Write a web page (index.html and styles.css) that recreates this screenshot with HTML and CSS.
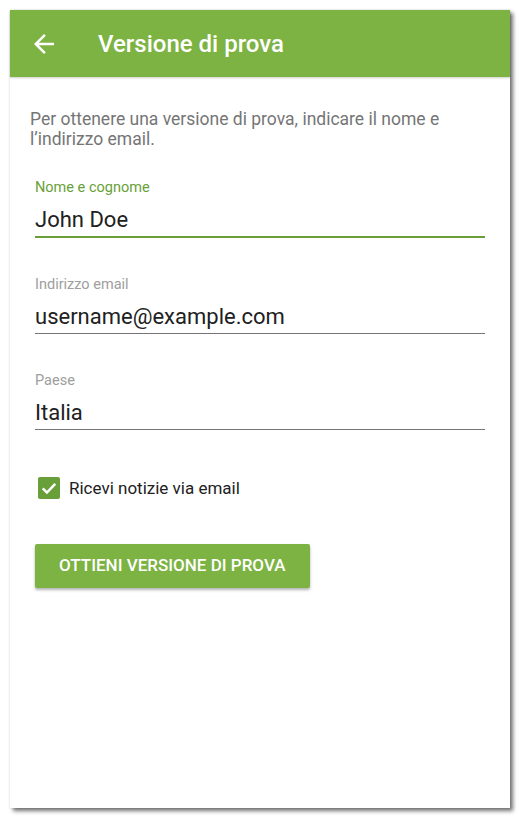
FILE: index.html
```html
<!DOCTYPE html>
<html lang="it">
<head>
    <meta charset="UTF-8">
    <meta name="viewport" content="width=device-width, initial-scale=1.0">
    <title>Versione di prova</title>
    <link rel="stylesheet" href="styles.css">
</head>
<body>
    <div class="schermo">

        <!-- Barra superiore -->
        <header class="barra">
            <span class="indietro">
                <svg width="30" height="30" viewBox="0 0 24 24">
                    <path d="M20 11H7.83l5.59-5.59L12 4l-8 8 8 8 1.41-1.41L7.83 13H20v-2z" fill="#fff"/>
                </svg>
            </span>
            <h1>Versione di prova</h1>
        </header>

        <main class="contenuto">
            <p class="intro">Per ottenere una versione di prova, indicare il nome e l’indirizzo email.</p>

            <div class="campo attivo">
                <label>Nome e cognome</label>
                <div class="valore">John Doe</div>
            </div>

            <div class="campo">
                <label>Indirizzo email</label>
                <div class="valore">username@example.com</div>
            </div>

            <div class="campo">
                <label>Paese</label>
                <div class="valore">Italia</div>
            </div>

            <!-- Casella newsletter -->
            <div class="casella">
                <span class="spunta">
                    <svg width="20" height="20" viewBox="0 0 24 24">
                        <polyline points="4.5,12.5 9.5,17.5 19.5,7" fill="none" stroke="#fff" stroke-width="3"/>
                    </svg>
                </span>
                <span>Ricevi notizie via email</span>
            </div>

            <button class="bottone">Ottieni versione di prova</button>
        </main>
    </div>
</body>
</html>
```

FILE: styles.css
```css
* {
    padding: 0;
    margin: 0;
    box-sizing: border-box;
}

body {
    background-color: #fff;
    font-family: Roboto, "Liberation Sans", sans-serif;
    padding: 10px;
}

/* Cornice del telefono */
.schermo {
    width: 500px;
    height: 798px;
    background-color: #fff;
    box-shadow: 3px 3px 4px rgba(0, 0, 0, 0.55), 0 0 2px rgba(0, 0, 0, 0.12);
}

/* Barra superiore */
.barra {
    height: 67px;
    background-color: #7cb342;
    display: flex;
    align-items: center;
    padding-left: 19px;
    box-shadow: 0 1px 2px rgba(0, 0, 0, 0.2);
}

.indietro {
    display: flex;
    width: 30px;
    height: 30px;
}

.barra h1 {
    color: #fff;
    font-size: 24px;
    font-weight: 500;
    margin-left: 39px;
}

.contenuto {
    padding: 32px 25px 0 20px;
}

.intro {
    font-size: 17.5px;
    line-height: 20px;
    color: #757575;
}

/* Campi del modulo */
.campo {
    margin-top: 38px;
    margin-left: 5px;
}

.intro + .campo {
    margin-top: 30px;
}

.campo label {
    display: block;
    font-size: 14.5px;
    line-height: 18px;
    color: #9e9e9e;
}

.campo .valore {
    margin-top: 8px;
    font-size: 22px;
    line-height: 30px;
    color: #212121;
    padding-bottom: 1px;
    border-bottom: 1px solid #757575;
    margin-bottom: 1px;
}

.campo.attivo label {
    color: #689f38;
}

.campo.attivo .valore {
    border-bottom: 2px solid #689f38;
    margin-bottom: 0;
}

/* Casella di spunta */
.casella {
    display: flex;
    align-items: center;
    margin: 47px 0 0 8px;
    font-size: 17px;
    line-height: 22px;
    color: #212121;
}

.spunta {
    width: 22px;
    height: 22px;
    border-radius: 2px;
    background-color: #689f38;
    display: flex;
    align-items: center;
    justify-content: center;
    margin-right: 9px;
}

/* Bottone principale */
.bottone {
    margin: 45px 0 0 5px;
    padding: 12px 24px 13px;
    background-color: #7cb342;
    color: #fff;
    border: none;
    border-radius: 2px;
    font-family: Roboto, "Liberation Sans", sans-serif;
    font-size: 17px;
    font-weight: 500;
    line-height: 19px;
    text-transform: uppercase;
    box-shadow: 0 2px 3px rgba(0, 0, 0, 0.3);
    cursor: pointer;
}
```
